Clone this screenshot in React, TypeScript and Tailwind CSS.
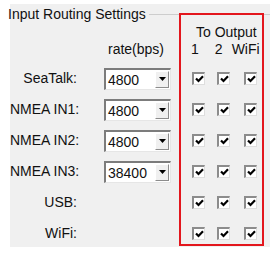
import React from 'react';

interface InputRow {
  name: string;
  rate?: string;
}

const rows: InputRow[] = [
  { name: 'SeaTalk:', rate: '4800' },
  { name: 'NMEA IN1:', rate: '4800' },
  { name: 'NMEA IN2:', rate: '4800' },
  { name: 'NMEA IN3:', rate: '38400' },
  { name: 'USB:' },
  { name: 'WiFi:' },
];

const CheckBox: React.FC = () => (
  <div className="w-[13px] h-[13px] border-t-2 border-l-2 border-t-[#8c8c8c] border-l-[#8c8c8c] border-r border-b border-r-[#dedede] border-b-[#dedede] bg-white flex items-center justify-center">
    <svg width="9" height="8" viewBox="0 0 9 8">
      <polyline points="1,3.5 3.5,6 8,1.3" fill="none" stroke="#000" strokeWidth="2.2" />
    </svg>
  </div>
);

const RateBox: React.FC<{ value: string }> = ({ value }) => (
  <div className="w-[67px] h-[22px] flex border-t-2 border-l-2 border-t-[#7c7c7c] border-l-[#7c7c7c] border-r border-b border-r-[#e6e6e6] border-b-[#e6e6e6] bg-white">
    <div className="flex-1 pl-[2px] leading-[20px]">{value}</div>
    <div className="w-[14px] my-[1px] mr-[1px] bg-[#f0f0f0] border border-t-white border-l-white border-r-[#8c8c8c] border-b-[#8c8c8c] flex items-center justify-center">
      <svg width="7" height="4" viewBox="0 0 7 4">
        <polygon points="0,0 7,0 3.5,4" fill="#000" />
      </svg>
    </div>
  </div>
);

export default function App() {
  return (
    <div
      className="w-[278px] h-[257px] bg-white overflow-hidden text-[14px] text-[#111]"
      style={{ fontFamily: '"Liberation Sans", Arial, sans-serif' }}
    >
      <div className="relative mt-[4px] ml-[10px] w-[260px] h-[243px] bg-[#f0f0f0]">
        {/* group box title */}
        <div className="flex items-center h-[20px] -ml-[2px]">
          <span className="whitespace-nowrap">Input Routing Settings</span>
          <div className="flex-1 h-px bg-[#cdcdcd] ml-[3px]" />
        </div>

        <div className="h-[17px] leading-[17px] pl-[186px] whitespace-nowrap">To Output</div>

        <div className="flex h-[16px] leading-[16px] whitespace-nowrap">
          <span className="ml-[98px]">rate(bps)</span>
          <span className="ml-[27px]">1</span>
          <span className="ml-[16px]">2</span>
          <span className="ml-[9px]">WiFi</span>
        </div>

        <div className="mt-[6px]">
          {rows.map((row) => (
            <div key={row.name} className="flex items-center h-[31px]">
              <div className="w-[67px] text-right whitespace-nowrap">{row.name}</div>
              <div className="ml-[27px] w-[67px]">{row.rate && <RateBox value={row.rate} />}</div>
              <div className="ml-[21px]">
                <CheckBox />
              </div>
              <div className="ml-[12px]">
                <CheckBox />
              </div>
              <div className="ml-[14px]">
                <CheckBox />
              </div>
            </div>
          ))}
        </div>

        {/* red highlight around output columns */}
        <div className="absolute left-[169px] top-[9px] w-[85px] h-[233px] border-2 border-[#e3161d]" />
      </div>
    </div>
  );
}
